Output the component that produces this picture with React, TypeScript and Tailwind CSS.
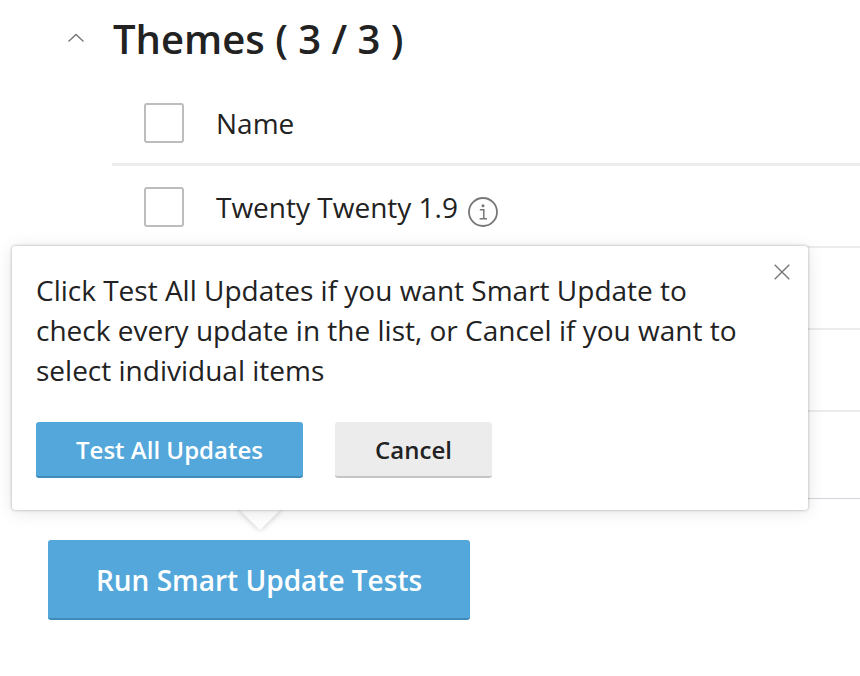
export default function App() {
  const font = { fontFamily: '"Open Sans", "Noto Sans", sans-serif' };
  return (
    <div style={font} className="relative w-[860px] h-[676px] bg-white overflow-hidden text-[#222]">
      <div className="flex items-center h-[78px] pl-[68px]">
        <svg width="16" height="10" viewBox="0 0 16 10" fill="none" stroke="#777" strokeWidth="1.4" className="mr-[29px] mt-[-2px]">
          <path d="M0.5 8.5 L8 1.5 L15.5 8.5" />
        </svg>
        <h2 className="text-[40px] leading-[50px] font-semibold">Themes ( 3 / 3 )</h2>
      </div>
      <div className="ml-[112px]">
        <div className="flex items-center h-[88px] pt-[4px] pl-[32px] border-b-[3px] border-[#ececec]">
          <span className="w-[40px] h-[40px] rounded-[3px] border-2 border-[#bdbdbd] bg-white" />
          <span className="ml-[32px] text-[28px] leading-[36px]">Name</span>
        </div>
        <div className="flex items-center h-[82px] pt-[2px] pl-[32px] border-b-2 border-[#ececec]">
          <span className="w-[40px] h-[40px] rounded-[3px] border-2 border-[#bdbdbd] bg-white" />
          <span className="ml-[32px] text-[28px] leading-[36px]">Twenty Twenty 1.9</span>
          <svg width="32" height="32" viewBox="0 0 32 32" fill="none" className="ml-[9px] mt-[9px]">
            <circle cx="16" cy="16" r="14" stroke="#777" strokeWidth="1.8" />
            <circle cx="16" cy="9.8" r="1.5" fill="#777" />
            <path d="M12.8 13.7 H16.8 V22.6 M12.6 22.8 H20" stroke="#777" strokeWidth="1.5" />
          </svg>
        </div>
        <div className="h-[82px] border-b-2 border-[#ececec]" />
        <div className="h-[82px] border-b-2 border-[#ececec]" />
        <div className="h-[87px] border-b border-[#d4d4dc]" />
      </div>
      <div className="pl-[48px] pt-[41px]">
        <button className="w-[422px] h-[80px] pt-[2px] bg-[#53a7da] border-b-[2px] border-[#3f8cbc] rounded-[3px] text-white text-[28px] font-semibold">
          Run Smart Update Tests
        </button>
      </div>

      <div className="absolute left-[245px] top-[494px] w-[30px] h-[30px] rotate-45 bg-white rounded-[2px] shadow-[0_0_6px_rgba(0,0,0,0.22)]" />
      <div className="absolute left-[12px] top-[246px] w-[796px] h-[264px] bg-white rounded-[3px] shadow-[0_0_3px_rgba(0,0,0,0.32),0_2px_18px_rgba(0,0,0,0.1)] pl-[24px] pt-[24px]">
        <svg width="16" height="16" viewBox="0 0 16 16" fill="none" stroke="#777" strokeWidth="1.4" className="absolute right-[18px] top-[18px]">
          <path d="M0.7 0.7 L15.3 15.3 M15.3 0.7 L0.7 15.3" />
        </svg>
        <p className="text-[28px] leading-[40px] w-[720px]">
          Click Test All Updates if you want Smart Update to check every update in the list, or Cancel if you want to select individual items
        </p>
        <div className="flex gap-[32px] mt-[32px]">
          <button className="w-[267px] h-[56px] pt-[1px] bg-[#53a7da] border-b-[2px] border-[#3f8cbc] rounded-[3px] text-white text-[24px] font-semibold">
            Test All Updates
          </button>
          <button className="w-[157px] h-[56px] pt-[1px] bg-[#ececec] border-b-[2px] border-[#c4c4c4] rounded-[3px] text-[#222] text-[24px] font-semibold">
            Cancel
          </button>
        </div>
      </div>
      <div className="absolute left-[240px] top-[505px] w-[40px] h-[5px] bg-white" />
    </div>
  );
}
